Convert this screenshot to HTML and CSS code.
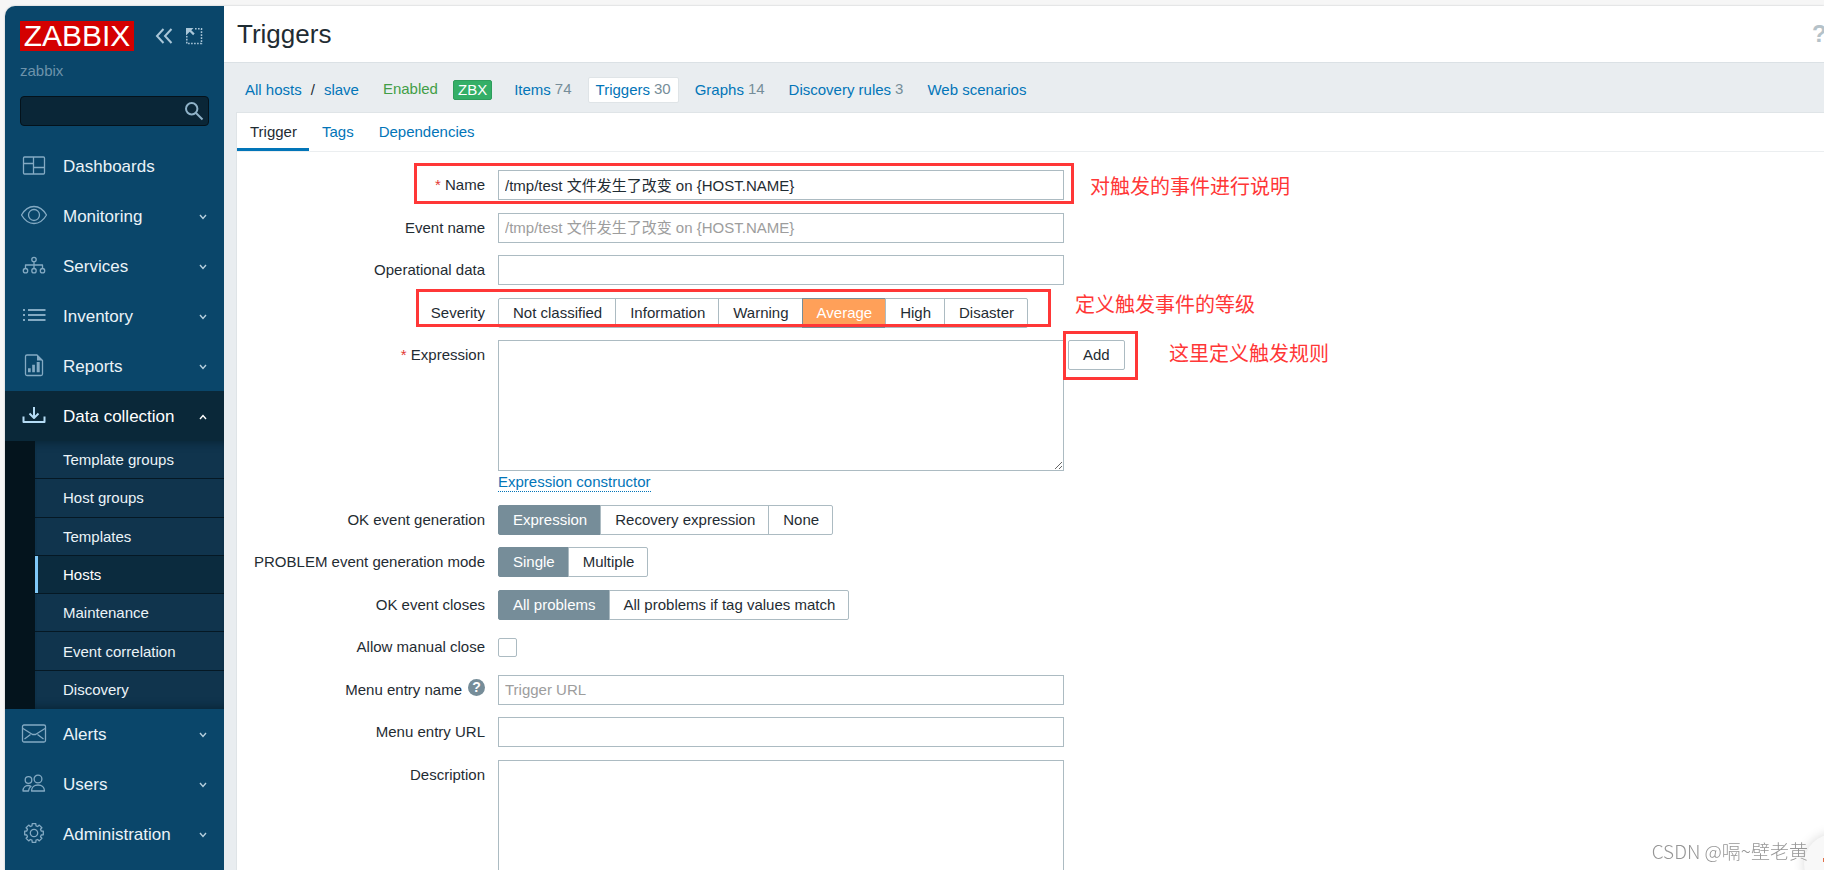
FILE: index.html
```html
<!DOCTYPE html>
<html lang="en">
<head>
<meta charset="utf-8">
<title>Triggers</title>
<link rel="stylesheet" href="styles.css">
</head>
<body>
<div class="app">
  <aside class="sidebar">
    <div class="brand">
      <a class="logo" href="#">ZABBIX</a>
      <button class="icon-button" type="button" aria-label="Collapse sidebar">
        <svg width="18" height="18" viewBox="0 0 18 18"><path d="M8.500 2 2 9l6.500 7M16.500 2 10 9l6.500 7"/></svg>
      </button>
      <button class="icon-button" type="button" aria-label="Hide sidebar">
        <svg width="18" height="18" viewBox="0 0 18 18"><path stroke-width="1.500" stroke-dasharray="1.600 1.400" d="M10 1.800h6.500v14.700H1.800V9"/><path stroke="none" fill="currentColor" d="M1 1h7.500L6.300 3.200l3.400 3.400-1.600 1.600-3.400-3.400L1 8.500Z"/></svg>
      </button>
    </div>
    <div class="server-name">zabbix</div>
    <form class="search">
      <input type="text" aria-label="Search">
      <button type="button" aria-label="Run search">
        <svg width="20" height="20" viewBox="0 0 20 20"><circle cx="7.700" cy="7.700" r="5.700"/><path d="m12 12 6.500 6.500"/></svg>
      </button>
    </form>
    <nav>
      <ul class="menu">
        <li><a class="menu-item" href="#"><svg class="icon" viewBox="0 0 28 24"><rect x="3.500" y="3" width="21" height="17" rx="1"/><path d="M13.500 3v17M3.500 9.500h10M13.500 13.500h11"/></svg><span>Dashboards</span></a></li>
        <li><a class="menu-item" href="#"><svg class="icon" viewBox="0 0 28 24"><path d="M1.500 11C5 5 9 2.500 14 2.500S23 5 26.500 11C23 17 19 19.500 14 19.500S5 17 1.500 11Z"/><circle cx="14" cy="11" r="5.500"/></svg><span>Monitoring</span><svg class="chevron" viewBox="0 0 8 8"><path d="m1 2 3 3.500L7 2"/></svg></a></li>
        <li><a class="menu-item" href="#"><svg class="icon" viewBox="0 0 28 24"><circle cx="14" cy="5.500" r="2.200"/><circle cx="5.500" cy="16.700" r="2.200"/><circle cx="14" cy="16.700" r="2.200"/><circle cx="22.500" cy="16.700" r="2.200"/><path d="M14 8v6M5.500 14v-3h17v3"/></svg><span>Services</span><svg class="chevron" viewBox="0 0 8 8"><path d="m1 2 3 3.500L7 2"/></svg></a></li>
        <li><a class="menu-item" href="#"><svg class="icon" viewBox="0 0 28 24"><path stroke-width="2" d="M3 6h2M8 6h17.500M3 11h2M8 11h17.500M3 16h2M8 16h17.500"/></svg><span>Inventory</span><svg class="chevron" viewBox="0 0 8 8"><path d="m1 2 3 3.500L7 2"/></svg></a></li>
        <li><a class="menu-item" href="#"><svg class="icon" viewBox="0 0 28 24"><path d="M7 1h10l5.500 5.500V20a1.500 1.500 0 0 1-1.500 1.500H7A1.500 1.500 0 0 1 5.500 20V2.500A1.500 1.500 0 0 1 7 1Z"/><path class="solid" d="M17 1v5.500h5.500ZM8 14.300h2.700v4H8ZM12.200 10.700h2.700v7.600h-2.700ZM16.700 8h3v10.300h-3Z"/></svg><span>Reports</span><svg class="chevron" viewBox="0 0 8 8"><path d="m1 2 3 3.500L7 2"/></svg></a></li>
        <li>
          <a class="menu-item is-open" href="#"><svg class="icon" viewBox="0 0 28 24"><path stroke-width="2" d="M14 3v10M9.500 9.500l4.500 4.500 4.500-4.500M3.500 12.500V18h21v-5.500"/></svg><span>Data collection</span><svg class="chevron" viewBox="0 0 8 8"><path d="m1 6 3-3.500L7 6"/></svg></a>
          <ul class="submenu">
            <li><a href="#">Template groups</a></li>
            <li><a href="#">Host groups</a></li>
            <li><a href="#">Templates</a></li>
            <li><a class="is-current" href="#">Hosts</a></li>
            <li><a href="#">Maintenance</a></li>
            <li><a href="#">Event correlation</a></li>
            <li><a href="#">Discovery</a></li>
          </ul>
        </li>
        <li><a class="menu-item" href="#"><svg class="icon" viewBox="0 0 28 24"><rect x="2.500" y="3" width="23" height="17" rx="1.500"/><path d="m3 6.500 9.500 6h3l9.500-6M4.500 17l6-4.500M23.500 17l-6-4.500"/></svg><span>Alerts</span><svg class="chevron" viewBox="0 0 8 8"><path d="m1 2 3 3.500L7 2"/></svg></a></li>
        <li><a class="menu-item" href="#"><svg class="icon" viewBox="0 0 28 24"><circle cx="8.500" cy="8" r="3.300"/><circle cx="18" cy="7" r="3.900"/><path d="M11.500 19c0-4 3-6 6.500-6s6.500 2 6.500 6ZM8.500 19H3c0-3.500 2.500-5.500 5-5.500 1.200 0 2 .2 3 .8-1.500 1.200-2.300 2.700-2.500 4.700Z"/></svg><span>Users</span><svg class="chevron" viewBox="0 0 8 8"><path d="m1 2 3 3.500L7 2"/></svg></a></li>
        <li><a class="menu-item" href="#"><svg class="icon" viewBox="0 0 28 24"><g transform="translate(14 11)"><circle r="3.700"/><path d="M7.200-2 9.300-1.800V1.800L7.200 2 6.500 3.700 7.900 5.300 5.300 7.900 3.700 6.500 2 7.200 1.800 9.300H-1.800L-2 7.200-3.700 6.500-5.300 7.900-7.900 5.300-6.500 3.700-7.200 2-9.300 1.800V-1.800L-7.200-2-6.500-3.700-7.900-5.300-5.300-7.900-3.700-6.500-2-7.200-1.800-9.300H1.800L2-7.200 3.700-6.500 5.300-7.900 7.900-5.300 6.500-3.700Z"/></g></svg><span>Administration</span><svg class="chevron" viewBox="0 0 8 8"><path d="m1 2 3 3.500L7 2"/></svg></a></li>
      </ul>
    </nav>
  </aside>

  <main class="main">
    <header class="page-header">
      <h1>Triggers</h1>
      <button class="help" type="button" aria-label="Help">?</button>
    </header>

    <nav class="host-nav">
      <div class="breadcrumbs"><a href="#">All hosts</a><span>/</span><a href="#">slave</a></div>
      <span class="status">Enabled</span>
      <span class="badge">ZBX</span>
      <div class="host-links">
        <span class="host-link"><a href="#">Items</a><sup>74</sup></span>
        <span class="host-link is-selected"><a href="#">Triggers</a><sup>30</sup></span>
        <span class="host-link"><a href="#">Graphs</a><sup>14</sup></span>
        <span class="host-link"><a href="#">Discovery rules</a><sup>3</sup></span>
        <span class="host-link"><a href="#">Web scenarios</a></span>
      </div>
    </nav>

    <section class="panel">
      <div class="tabs">
        <a class="is-active" href="#">Trigger</a>
        <a href="#">Tags</a>
        <a href="#">Dependencies</a>
      </div>

      <form class="form">
        <div class="row">
          <label class="label required" for="name">Name</label>
          <input class="text" id="name" type="text" value="/tmp/test 文件发生了改变 on {HOST.NAME}">
        </div>
        <div class="row">
          <label class="label" for="event-name">Event name</label>
          <input class="text" id="event-name" type="text" placeholder="/tmp/test 文件发生了改变 on {HOST.NAME}">
        </div>
        <div class="row">
          <label class="label" for="opdata">Operational data</label>
          <input class="text" id="opdata" type="text">
        </div>
        <div class="row">
          <span class="label" id="severity-label">Severity</span>
          <div class="segments" role="radiogroup" aria-labelledby="severity-label">
            <label><input type="radio" name="severity"><span>Not classified</span></label>
            <label><input type="radio" name="severity"><span>Information</span></label>
            <label><input type="radio" name="severity"><span>Warning</span></label>
            <label class="average"><input type="radio" name="severity" checked><span>Average</span></label>
            <label><input type="radio" name="severity"><span>High</span></label>
            <label><input type="radio" name="severity"><span>Disaster</span></label>
          </div>
        </div>
        <div class="row">
          <label class="label required" for="expression">Expression</label>
          <div>
            <div class="expression">
              <textarea class="text area" id="expression"></textarea>
              <button class="button" type="button">Add</button>
            </div>
            <a class="dotted-link" href="#">Expression constructor</a>
          </div>
        </div>
        <div class="row">
          <span class="label" id="ok-gen-label">OK event generation</span>
          <div class="segments" role="radiogroup" aria-labelledby="ok-gen-label">
            <label><input type="radio" name="ok-gen" checked><span>Expression</span></label>
            <label><input type="radio" name="ok-gen"><span>Recovery expression</span></label>
            <label><input type="radio" name="ok-gen"><span>None</span></label>
          </div>
        </div>
        <div class="row">
          <span class="label" id="mode-label">PROBLEM event generation mode</span>
          <div class="segments" role="radiogroup" aria-labelledby="mode-label">
            <label><input type="radio" name="mode" checked><span>Single</span></label>
            <label><input type="radio" name="mode"><span>Multiple</span></label>
          </div>
        </div>
        <div class="row">
          <span class="label" id="closes-label">OK event closes</span>
          <div class="segments" role="radiogroup" aria-labelledby="closes-label">
            <label><input type="radio" name="closes" checked><span>All problems</span></label>
            <label><input type="radio" name="closes"><span>All problems if tag values match</span></label>
          </div>
        </div>
        <div class="row">
          <label class="label" for="manual-close">Allow manual close</label>
          <input class="checkbox" id="manual-close" type="checkbox">
        </div>
        <div class="row">
          <span class="label"><label for="menu-name">Menu entry name</label><button class="hint" type="button" aria-label="Menu entry name help">?</button></span>
          <input class="text" id="menu-name" type="text" placeholder="Trigger URL">
        </div>
        <div class="row">
          <label class="label" for="menu-url">Menu entry URL</label>
          <input class="text" id="menu-url" type="text">
        </div>
        <div class="row">
          <label class="label" for="description">Description</label>
          <textarea class="text area" id="description"></textarea>
        </div>

        <div class="mark mark-name"></div>
        <p class="note note-name">对触发的事件进行说明</p>
        <div class="mark mark-severity"></div>
        <p class="note note-severity">定义触发事件的等级</p>
        <div class="mark mark-add"></div>
        <p class="note note-add">这里定义触发规则</p>
      </form>
    </section>
  </main>
</div>
<div class="bubble"></div>
<div class="watermark">CSDN @嗝~壁老黄</div>
</body>
</html>
```
FILE: styles.css
```css
* {
  box-sizing: border-box;
}

body {
  margin: 0;
  height: 100vh;
  overflow: hidden;
  background: #f6f6f6;
  color: #1f2c33;
  font: 15px/20px "Liberation Sans", Arial, "Noto Sans CJK SC", sans-serif;
}

a {
  color: #0275b8;
  text-decoration: none;
}

button,
input,
textarea {
  margin: 0;
  font: inherit;
  color: inherit;
}

button {
  padding: 0;
  border: 0;
  background: none;
}

ul {
  margin: 0;
  padding: 0;
  list-style: none;
}

svg {
  flex-shrink: 0;
  fill: none;
  stroke: currentColor;
}

.app {
  display: flex;
  height: calc(100vh - 6px);
  margin: 6px 0 0 5px;
  border-top-left-radius: 10px;
  overflow: hidden;
  box-shadow: 0 0 2px #b8bcbf;
}

/* Sidebar */

.sidebar {
  flex: 0 0 219px;
  min-width: 0;
  background: #0a466a;
}

.brand {
  display: flex;
  align-items: center;
  padding: 15px 15px 0;
}

.logo {
  width: 114px;
  margin-right: 21px;
  background: #d40000;
  color: #fff;
  font-size: 30px;
  line-height: 30px;
  text-align: center;
}

.icon-button {
  display: flex;
  margin-right: 12px;
  color: #a9c6d8;
}

.icon-button svg {
  stroke-width: 2;
}

.icon-button:last-child {
  margin-right: 0;
}

.server-name {
  padding: 10px 15px 0;
  color: #6d93ab;
}

.search {
  display: flex;
  align-items: center;
  margin: 15px 15px;
  border: 1px solid #04121b;
  border-radius: 4px;
  background: #0a2637;
}

.search input {
  flex: 1;
  width: 100%;
  min-width: 0;
  height: 28px;
  border: 0;
  background: none;
  color: #fff;
}

.search button {
  display: flex;
  margin-right: 4px;
  color: #8fb2c8;
}

.search svg {
  stroke-width: 2;
}

.menu-item {
  display: flex;
  align-items: center;
  height: 50px;
  padding: 0 17px 0 15px;
  color: #ebf3f8;
  font-size: 17px;
}

.menu-item span {
  flex: 1;
  padding-top: 1px;
  white-space: nowrap;
}

.menu-item.is-open {
  background: #0a2839;
  color: #fff;
}

.icon {
  width: 28px;
  height: 24px;
  margin-right: 15px;
  color: #84aac3;
  stroke-width: 1.3;
  stroke-linejoin: round;
}

.icon .solid {
  fill: currentColor;
  stroke: none;
}

.is-open .icon {
  color: #b5dcf5;
}

.chevron {
  width: 8px;
  height: 8px;
  margin-top: 2px;
  color: #b7cfdd;
  stroke-width: 1.4;
}

.is-open .chevron {
  color: #fff;
}

.submenu {
  display: grid;
  grid-auto-rows: 1fr;
  height: 268px;
  border-left: 30px solid #04141d;
  background: #10344d;
  box-shadow: inset 0 10px 8px -8px #092536, inset 0 -10px 8px -8px #092536;
}

.submenu li {
  display: flex;
  border-bottom: 1px solid #051824;
}

.submenu li:last-child {
  border-bottom: 0;
}

.submenu a {
  flex: 1;
  display: flex;
  align-items: center;
  padding: 1px 0 0 25px;
  border-left: 3px solid transparent;
  color: #ebf3f8;
}

.submenu .is-current {
  border-left-color: #7fc8f8;
  background: #0b2b3e;
  color: #fff;
}

/* Page head */

.main {
  flex: 1;
  min-width: 0;
  display: flex;
  flex-direction: column;
  background: #e9edf0;
}

.page-header {
  display: flex;
  align-items: center;
  justify-content: space-between;
  height: 57px;
  padding-left: 13px;
  border-bottom: 1px solid #dbe1e5;
  background: #fff;
}

h1 {
  margin: 0;
  font-size: 26px;
  font-weight: 400;
  line-height: 30px;
}

.help {
  width: 12px;
  color: #b5c2c9;
  font-size: 24px;
  font-weight: 700;
}

.host-nav {
  display: flex;
  align-items: center;
  height: 49px;
  padding: 4px 21px 0;
}

.breadcrumbs {
  display: flex;
  gap: 9px;
}

.status {
  margin: 0 15px 2px 24px;
  color: #429e47;
}

.badge {
  padding: 0 4px;
  border: 1px solid #2e9d5c;
  border-radius: 2px;
  background: #34af67;
  color: #fff;
  line-height: 18px;
}

.host-links {
  display: flex;
  gap: 8px;
  margin-left: 14px;
}

.host-link {
  display: flex;
  gap: 4px;
  padding: 2px 7px;
  border: 1px solid transparent;
  border-radius: 2px;
}

.host-link.is-selected {
  border-color: #dfe4e7;
  background: #fff;
}

.host-link sup {
  padding-bottom: 2px;
  color: #768d99;
  font-size: 15px;
  line-height: 18px;
  vertical-align: top;
}

/* Panel */

.panel {
  flex: 1;
  min-height: 0;
  margin-left: 12px;
  border: 1px solid #dfe4e7;
  border-width: 1px 0 0 1px;
  background: #fff;
}

.tabs {
  display: flex;
  height: 39px;
  border-bottom: 1px solid #ebeef0;
}

.tabs a {
  padding: 9px 12px 0 13px;
}

.tabs .is-active {
  border-bottom: 3px solid #0275b8;
  color: #1f2c33;
}

.form {
  position: relative;
  padding-top: 18px;
}

.row {
  display: grid;
  grid-template-columns: 248px minmax(0, 1fr);
  column-gap: 13px;
  min-height: 30px;
  margin-top: 12px;
}

.row:nth-child(even) {
  margin-top: 13px;
}

.row:first-child {
  margin-top: 0;
}

.label {
  line-height: 30px;
  text-align: right;
}

.required::before {
  content: "* ";
  color: #e33734;
}

.text {
  display: block;
  width: 566px;
  max-width: 100%;
  height: 30px;
  padding: 0 6px 1px;
  border: 1px solid #acbbc2;
  border-radius: 0;
  background: #fff;
}

.text::placeholder {
  color: #9d9d9d;
}

.area {
  height: 131px;
}

.expression {
  display: flex;
  align-items: flex-start;
  gap: 4px;
}

.dotted-link {
  display: inline-block;
  margin-top: 2px;
  border-bottom: 1px dotted #0275b8;
  line-height: 18px;
}

.button {
  height: 30px;
  padding: 0 14px;
  border: 1px solid #acbbc2;
  border-radius: 2px;
  background: #fff;
}

.segments {
  display: flex;
  height: 30px;
}

.segments label {
  position: relative;
  margin-right: -1px;
}

.segments input {
  position: absolute;
  inset: 0;
  appearance: none;
}

.segments span {
  display: block;
  padding: 0 13px 0 14px;
  border: 1px solid #acbbc2;
  line-height: 28px;
}

.segments label:first-child span {
  border-radius: 2px 0 0 2px;
}

.segments label:last-child span {
  border-radius: 0 2px 2px 0;
}

.segments input:checked + span {
  position: relative;
  border-color: #768d99;
  background: #768d99;
  color: #fff;
}

.segments .average input:checked + span {
  background: #ffa059;
}

.checkbox {
  appearance: none;
  align-self: center;
  width: 19px;
  height: 19px;
  border: 1px solid #acbbc2;
  border-radius: 2px;
  background: #fff;
}

.hint {
  width: 17px;
  height: 17px;
  margin-left: 6px;
  border-radius: 50%;
  background: #768d99;
  color: #fff;
  font-size: 14px;
  font-weight: 700;
  line-height: 17px;
  vertical-align: 3px;
}

/* Callouts drawn over the form */

.mark {
  position: absolute;
  border: 3px solid #ff3737;
}

.note {
  position: absolute;
  margin: 0;
  color: #ff3737;
  font-size: 20px;
  line-height: 30px;
}

.mark-name {
  left: 177px;
  top: 11px;
  width: 660px;
  height: 41px;
}

.note-name {
  left: 853px;
  top: 20px;
}

.mark-severity {
  left: 179px;
  top: 137px;
  width: 635px;
  height: 38px;
}

.note-severity {
  left: 838px;
  top: 138px;
}

.mark-add {
  left: 826px;
  top: 179px;
  width: 75px;
  height: 49px;
}

.note-add {
  left: 932px;
  top: 187px;
}

.bubble {
  position: fixed;
  right: -40px;
  bottom: -24px;
  width: 60px;
  height: 60px;
  border-radius: 50%;
  background: #f8f8f8;
  box-shadow: 0 0 12px #d8d8d8;
}

.bubble::after {
  content: "";
  position: absolute;
  left: 19px;
  top: 24px;
  width: 4px;
  height: 4px;
  background: #e0704a;
}

.watermark {
  position: fixed;
  right: 16px;
  bottom: 5px;
  color: #969696;
  font: 300 19px/28px "Noto Sans CJK SC", sans-serif;
}
```
